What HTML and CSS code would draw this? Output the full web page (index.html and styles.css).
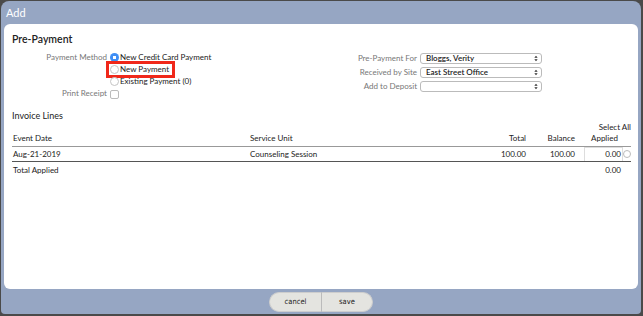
FILE: index.html
```html
<!DOCTYPE html>
<html lang="en">
<head>
    <meta charset="UTF-8">
    <meta name="viewport" content="width=device-width, initial-scale=1.0">
    <link rel="stylesheet" href="styles.css">
</head>
<body>
    <div class="dialog">
        <div class="dialog-title">Add</div>
        <div class="panel">
            <h2 class="section-title">Pre-Payment</h2>
            <div class="form-columns">
                <div class="form-left">
                    <div class="form-row">
                        <span class="field-label">Payment Method</span>
                        <span class="radio checked"></span>
                        <span class="option">New Credit Card Payment</span>
                    </div>
                    <div class="form-row">
                        <span class="field-label"></span>
                        <span class="highlight">
                            <span class="radio"></span>
                            <span class="option">New Payment</span>
                        </span>
                    </div>
                    <div class="form-row">
                        <span class="field-label"></span>
                        <span class="radio"></span>
                        <span class="option">Existing Payment (0)</span>
                    </div>
                    <div class="form-row">
                        <span class="field-label">Print Receipt</span>
                        <span class="checkbox"></span>
                    </div>
                </div>
                <div class="form-right">
                    <div class="form-row select-row">
                        <span class="field-label">Pre-Payment For</span>
                        <span class="select">Bloggs, Verity<svg class="select-arrow" viewBox="0 0 6 10"><path d="M3 1 L5.5 4 H0.5 Z M3 9 L5.5 6 H0.5 Z" fill="#333"/></svg></span>
                    </div>
                    <div class="form-row select-row">
                        <span class="field-label">Received by Site</span>
                        <span class="select">East Street Office<svg class="select-arrow" viewBox="0 0 6 10"><path d="M3 1 L5.5 4 H0.5 Z M3 9 L5.5 6 H0.5 Z" fill="#333"/></svg></span>
                    </div>
                    <div class="form-row select-row">
                        <span class="field-label">Add to Deposit</span>
                        <span class="select"><svg class="select-arrow" viewBox="0 0 6 10"><path d="M3 1 L5.5 4 H0.5 Z M3 9 L5.5 6 H0.5 Z" fill="#333"/></svg></span>
                    </div>
                </div>
            </div>

            <h3 class="sub-title">Invoice Lines</h3>
            <table class="invoice-table">
                <thead>
                    <tr>
                        <th class="col-date">Event Date</th>
                        <th class="col-unit">Service Unit</th>
                        <th class="num col-total">Total</th>
                        <th class="num col-balance">Balance</th>
                        <th class="col-applied"><div class="select-all">Select All</div><div class="applied-head">Applied</div></th>
                    </tr>
                </thead>
                <tbody>
                    <tr class="line-row">
                        <td>Aug-21-2019</td>
                        <td>Counseling Session</td>
                        <td class="num">100.00</td>
                        <td class="num">100.00</td>
                        <td class="applied-cell">
                            <div class="applied-wrap"><span class="amount-input">0.00</span><span class="ring"></span></div>
                        </td>
                    </tr>
                    <tr class="total-row">
                        <td>Total Applied</td>
                        <td></td>
                        <td></td>
                        <td></td>
                        <td class="total-applied">0.00</td>
                    </tr>
                </tbody>
            </table>
        </div>
        <div class="dialog-footer">
            <div class="button-group">
                <button class="btn btn-left">cancel</button>
                <button class="btn btn-right">save</button>
            </div>
        </div>
    </div>
</body>
</html>
```

FILE: styles.css
```css
html, body {
    margin: 0;
    height: 100%;
}

body {
    background-color: #4a4a4a;
    font-family: Lato, "Open Sans", sans-serif;
    font-size: 8px;
    color: #222;
    overflow: hidden;
}

.dialog {
    box-sizing: border-box;
    margin: 1px 2px 0 1px;
    height: 313px;
    background-color: #96a6c3; /* slate blue frame */
    border-radius: 8px 8px 4px 4px;
    display: flex;
    flex-direction: column;
}

.dialog-title {
    height: 23px;
    line-height: 24px;
    padding-left: 5px;
    color: #fff;
    font-size: 11px;
}

.panel {
    flex: 1;
    margin: 0 3px 0 3px;
    background-color: #fff;
    border-radius: 6px;
    padding: 8px 8px 0 8px;
}

.section-title {
    margin: 0;
    font-size: 10.5px;
    font-weight: 600;
    line-height: 14px;
    color: #222;
}

.form-columns {
    display: flex;
    margin-top: 5px;
}

.form-left {
    width: 330px;
}

.form-row {
    display: flex;
    align-items: center;
    height: 12px;
}

.field-label {
    width: 95px;
    text-align: right;
    color: #777;
    padding-right: 3px;
}

.form-right .field-label {
    width: 75px;
}

.select-row {
    height: 14px;
}

.radio {
    box-sizing: border-box;
    width: 9px;
    height: 9px;
    border-radius: 50%;
    border: 1px solid #c4c4c4;
    background: #fff;
    margin-right: 1px;
    flex: none;
}

.radio.checked {
    border: none;
    background: radial-gradient(circle, #fff 0 1.5px, #3e8ef5 2px);
}

.option {
    color: #222;
}

.highlight {
    display: flex;
    align-items: center;
    margin-left: -4px;
    padding: 0 3px 0 1px;
    border: 3px solid #f0281a;
    height: 11px;
}

.checkbox {
    box-sizing: border-box;
    width: 9px;
    height: 9px;
    border: 1px solid #bbb;
    border-radius: 2px;
    margin-top: 2px;
}

.select {
    box-sizing: border-box;
    display: flex;
    align-items: center;
    width: 122px;
    height: 11px;
    padding: 0 3px 0 5px;
    border: 1px solid #bbb;
    border-radius: 3px;
    font-weight: 600;
    color: #222;
    font-size: 8px;
}

.select-arrow {
    width: 4px;
    height: 7px;
    margin-left: auto;
}

.sub-title {
    margin: 11px 0 0 0;
    font-size: 9px;
    font-weight: 400;
    line-height: 12px;
}

.invoice-table {
    width: 100%;
    margin-top: 0;
    border-collapse: collapse;
    font-size: 8px;
    table-layout: fixed;
}

.invoice-table th {
    box-sizing: border-box;
    font-weight: 400;
    text-align: left;
    vertical-align: bottom;
    padding: 0 1px 2px 1px;
    line-height: 11px;
    border-bottom: 1px solid #999;
}

.invoice-table td {
    padding: 0 1px;
    height: 14px;
}

.invoice-table .num {
    text-align: right;
}

.col-date {
    width: 237px;
}

.col-unit {
    width: 216px;
}

.col-total {
    width: 62px;
}

.col-balance {
    width: 49px;
}

.col-applied {
    width: 55px;
}

.invoice-table th.col-applied {
    text-align: left;
    padding-left: 15px;
    padding-right: 0;
}

.select-all {
    text-align: right;
}

.line-row td {
    border-bottom: 1px solid #555;
}

.invoice-table td.applied-cell {
    padding: 0;
}

.applied-wrap {
    display: flex;
    align-items: center;
    justify-content: flex-end;
}

.amount-input {
    box-sizing: border-box;
    display: inline-block;
    width: 39px;
    height: 14px;
    line-height: 13px;
    border: 1px solid #ddd;
    border-bottom: none;
    text-align: right;
    padding-right: 1px;
}

.ring {
    box-sizing: border-box;
    width: 8px;
    height: 8px;
    border-radius: 50%;
    border: 1.5px solid #bbb;
}

.total-row td {
    height: 15px;
}

.invoice-table td.total-applied {
    text-align: right;
    padding-right: 10px;
}

.dialog-footer {
    height: 25px;
    display: flex;
    justify-content: center;
    align-items: center;
}

.button-group {
    display: flex;
}

.btn {
    height: 20px;
    width: 53px;
    border: 1px solid #cdcdcd;
    background-color: #e4e4e0;
    font-family: "DejaVu Sans Condensed", "DejaVu Sans", sans-serif;
    font-size: 7.5px;
    color: #222;
    padding: 0;
}

.btn-left {
    border-radius: 10px 0 0 10px;
    border-right: 1px solid #bbb;
}

.btn-right {
    width: 51px;
    border-left: none;
    border-radius: 0 10px 10px 0;
}
```
